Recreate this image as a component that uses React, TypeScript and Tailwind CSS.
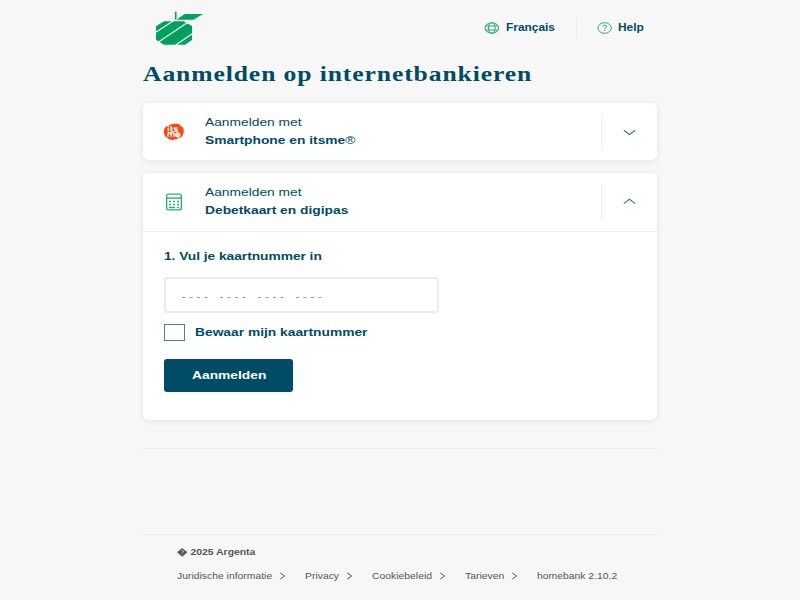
import type { ReactNode } from "react";

function Wide({ children, className = "", scale = "scale-x-[1.18]" }: { children: ReactNode; className?: string; scale?: string }) {
  return (
    <span className={`block origin-left whitespace-nowrap ${scale} ${className}`}>
      {children}
    </span>
  );
}

function Logo() {
  return (
    <svg width="50" height="36" viewBox="0 0 50 36" fill="none">
      <path d="M9 10.2H28.5L37 15V29L30 33.7H9L1 28.8V15.2Z" fill="#00a15f" />
      <path d="M0 21.8L18.5 9.8M3.5 31L32.5 11.5M20 34.5L38 22.3" stroke="#f7f7f7" strokeWidth="1.2" />
      <path d="M29.5 3H48L38.5 8.8H21.5Z" fill="#00a15f" />
      <path d="M20.7 .7V8.5" stroke="#00a15f" strokeWidth="1.7" />
    </svg>
  );
}

function Globe() {
  return (
    <svg width="16" height="12" viewBox="0 0 16 12" fill="none" stroke="#2fae78" strokeWidth="1.1">
      <ellipse cx="7.8" cy="6" rx="6.8" ry="5.2" />
      <ellipse cx="7.8" cy="6" rx="3.4" ry="5.2" />
      <path d="M1.5 4H14M1.5 8H14" strokeWidth="1" />
    </svg>
  );
}

function HelpIcon() {
  return (
    <svg width="16" height="12" viewBox="0 0 16 12" fill="none" stroke="#2fae78" strokeWidth="1">
      <ellipse cx="7.6" cy="6" rx="6.7" ry="5.3" />
      <path d="M5.7 4.6C5.8 2.7 9.7 2.7 9.7 4.6C9.7 5.7 7.6 5.6 7.6 7.2" />
      <path d="M7.6 8.1V9.2" />
    </svg>
  );
}

function Itsme() {
  return (
    <svg width="22" height="18" viewBox="0 0 22 18" fill="none">
      <path d="M8 1.4C9.5 .6 14 .5 16 1.2L18.6 3.6C20.9 4.8 21.2 7 20.4 10.6C19.8 13.2 18.2 14.8 14.6 15.8C11 17.2 8 17.2 6.2 16.2L2.6 13.8C1.6 12 .3 10 .9 7.4C1.2 5 2.5 3.6 4.6 3Z" fill="#ff4612" />
      <g stroke="#fff" strokeWidth="1.4">
        <path d="M5.3 4.8V8.3M5.3 2.8V4M7.9 3.3V7C7.9 8.2 8.8 8.3 10.4 8.1M7.2 5.1H10.2M14.6 5.2C12.3 4.4 11.3 5.1 11.5 6C11.8 6.9 14.5 6.2 14.5 7.5C14.4 8.6 12.4 8.5 11.2 8.1" />
        <path d="M5 14V11.1C5 9.5 7.9 9.3 8 11V14M8 11C8.1 9.3 11 9.3 11 11V14M12.8 12H16.7C16.8 9.3 12.7 9.1 12.7 11.7C12.7 14.1 15.5 14.2 16.7 13.2" />
      </g>
    </svg>
  );
}

function Digipas() {
  return (
    <svg width="18" height="18" viewBox="0 0 18 18" fill="none" stroke="#2bb07a">
      <rect x="1.6" y="1.1" width="14.8" height="15.8" rx="1.8" strokeWidth="1.4" />
      <path d="M1.5 5.1H16.5" strokeWidth="1.4" />
      <path d="M4 8.5H6M8 8.5H10M12 8.5H14M4 11.5H6M8 11.5H10M12 11.5H14M4 14.5H10M12 14.5H14" strokeWidth="1.4" />
    </svg>
  );
}

function Chevron({ up = false }: { up?: boolean }) {
  return (
    <svg width="13" height="7" viewBox="0 0 13 7" fill="none" stroke="#39748f" strokeWidth="1.1">
      <path d={up ? "M.8 5.6L6.5 1.3L12.2 5.6" : "M.8 1.2L6.5 5.5L12.2 1.2"} />
    </svg>
  );
}

function MethodHeader({ icon, label, up, className }: { icon: ReactNode; label: ReactNode; up?: boolean; className: string }) {
  return (
    <div className={`flex items-center ${className}`}>
      <div className="flex w-[62px] justify-center">{icon}</div>
      <div className={`flex-1 text-[11.7px] leading-[18px] ${up ? "pb-0.5" : "pb-px"}`}>
        <Wide>Aanmelden met</Wide>
        <Wide className="font-bold">{label}</Wide>
      </div>
      <div className={`flex h-9 w-14 items-center justify-center border-l border-[#ebebeb] ${up ? "pb-px" : "pt-px"}`}>
        <Chevron up={up} />
      </div>
    </div>
  );
}

const cardShadow = "rounded-md bg-white shadow-[0_1px_6px_rgba(0,0,0,0.09)]";

const links = [
  { label: "Juridische informatie", width: "w-32", text: "w-[102px]" },
  { label: "Privacy", width: "w-[67px]", text: "w-[41px]" },
  { label: "Cookiebeleid", width: "w-[93px]", text: "w-[67px]" },
  { label: "Tarieven", width: "w-[72px]", text: "w-[46px]" },
];

export default function App() {
  return (
    <div className="h-[600px] w-[800px] overflow-hidden bg-[#f7f7f7] font-['Liberation_Sans',Arial,sans-serif] text-[#004b66]">
      <div className="ml-[142.5px] flex w-[514.5px] flex-col">
        <header className="flex h-14 items-start pt-[11px]">
          <div className="ml-[12.5px] w-[329px]">
            <Logo />
          </div>
          <div className="flex h-[34px] w-[92px] items-center text-[10.1px] font-bold">
            <div className="w-[22px]"><Globe /></div>
            <Wide>Français</Wide>
          </div>
          <div className="mt-[7px] flex h-5 items-center border-l border-[#ebebeb] pl-5 text-[10.1px] font-bold">
            <div className="w-[21px]"><HelpIcon /></div>
            <Wide>Help</Wide>
          </div>
        </header>

        <h1 className="h-[47px] pt-[5px] font-['Liberation_Serif','Times_New_Roman',serif] text-[21px] leading-[27px] font-bold tracking-[0.73px]">
          <Wide scale="scale-x-[1.22]">Aanmelden op internetbankieren</Wide>
        </h1>

        <section className={`h-[57px] ${cardShadow}`}>
          <MethodHeader className="h-[57px]" icon={<Itsme />} label={<>Smartphone en itsme<span className="font-normal">®</span></>} />
        </section>

        <section className={`mt-[13px] h-[247px] ${cardShadow}`}>
          <MethodHeader className="h-[59px] border-b border-[#efefef]" icon={<Digipas />} label="Debetkaart en digipas" up />
          <div className="flex flex-col items-start pt-4 pl-[21px] text-[11.7px] leading-4 font-bold">
            <Wide className="tracking-[-0.04px]">1. Vul je kaartnummer in</Wide>
            <div className="mt-[13px] flex h-9 w-[275px] items-center rounded-[3px] border-2 border-[#ececec] pt-1 pl-4 font-normal">
              <svg width="145" height="3" viewBox="0 0 145 3" stroke="#9a9a9a">
                {[0, 38, 76, 114].map((x) => (
                  <path key={x} d={`M${x} 1.5h3m4.5 0h3m4.5 0h3m4.5 0h3`} />
                ))}
              </svg>
            </div>
            <div className="mt-[11px] flex h-[17px] items-center">
              <div className="h-[17px] w-[21px] border border-[#4d8197]" />
              <Wide className="-mt-px ml-[10px]">Bewaar mijn kaartnummer</Wide>
            </div>
            <button className="mt-[18px] flex h-[33px] w-[129px] items-center rounded-[3px] bg-[#004b66] pb-0.5 pl-7 text-white">
              <Wide>Aanmelden</Wide>
            </button>
          </div>
        </section>

        <div className="mt-7 border-t border-[#ebebeb]" />
        <footer className="mt-[85px] border-t border-[#ebebeb] pt-[11px] pl-[34px] text-[8.8px] leading-3 text-[#555]">
          <Wide className="font-bold">� 2025 Argenta</Wide>
          <nav className="mt-3 flex items-center">
            {links.map((link) => (
              <div key={link.label} className={`flex items-center ${link.width}`}>
                <div className={link.text}><Wide>{link.label}</Wide></div>
                <svg width="7" height="8" viewBox="0 0 7 8" fill="none" stroke="#555" strokeWidth="1">
                  <path d="M1.2 1L5.7 4L1.2 7" />
                </svg>
              </div>
            ))}
            <Wide>homebank 2.10.2</Wide>
          </nav>
        </footer>
      </div>
    </div>
  );
}
